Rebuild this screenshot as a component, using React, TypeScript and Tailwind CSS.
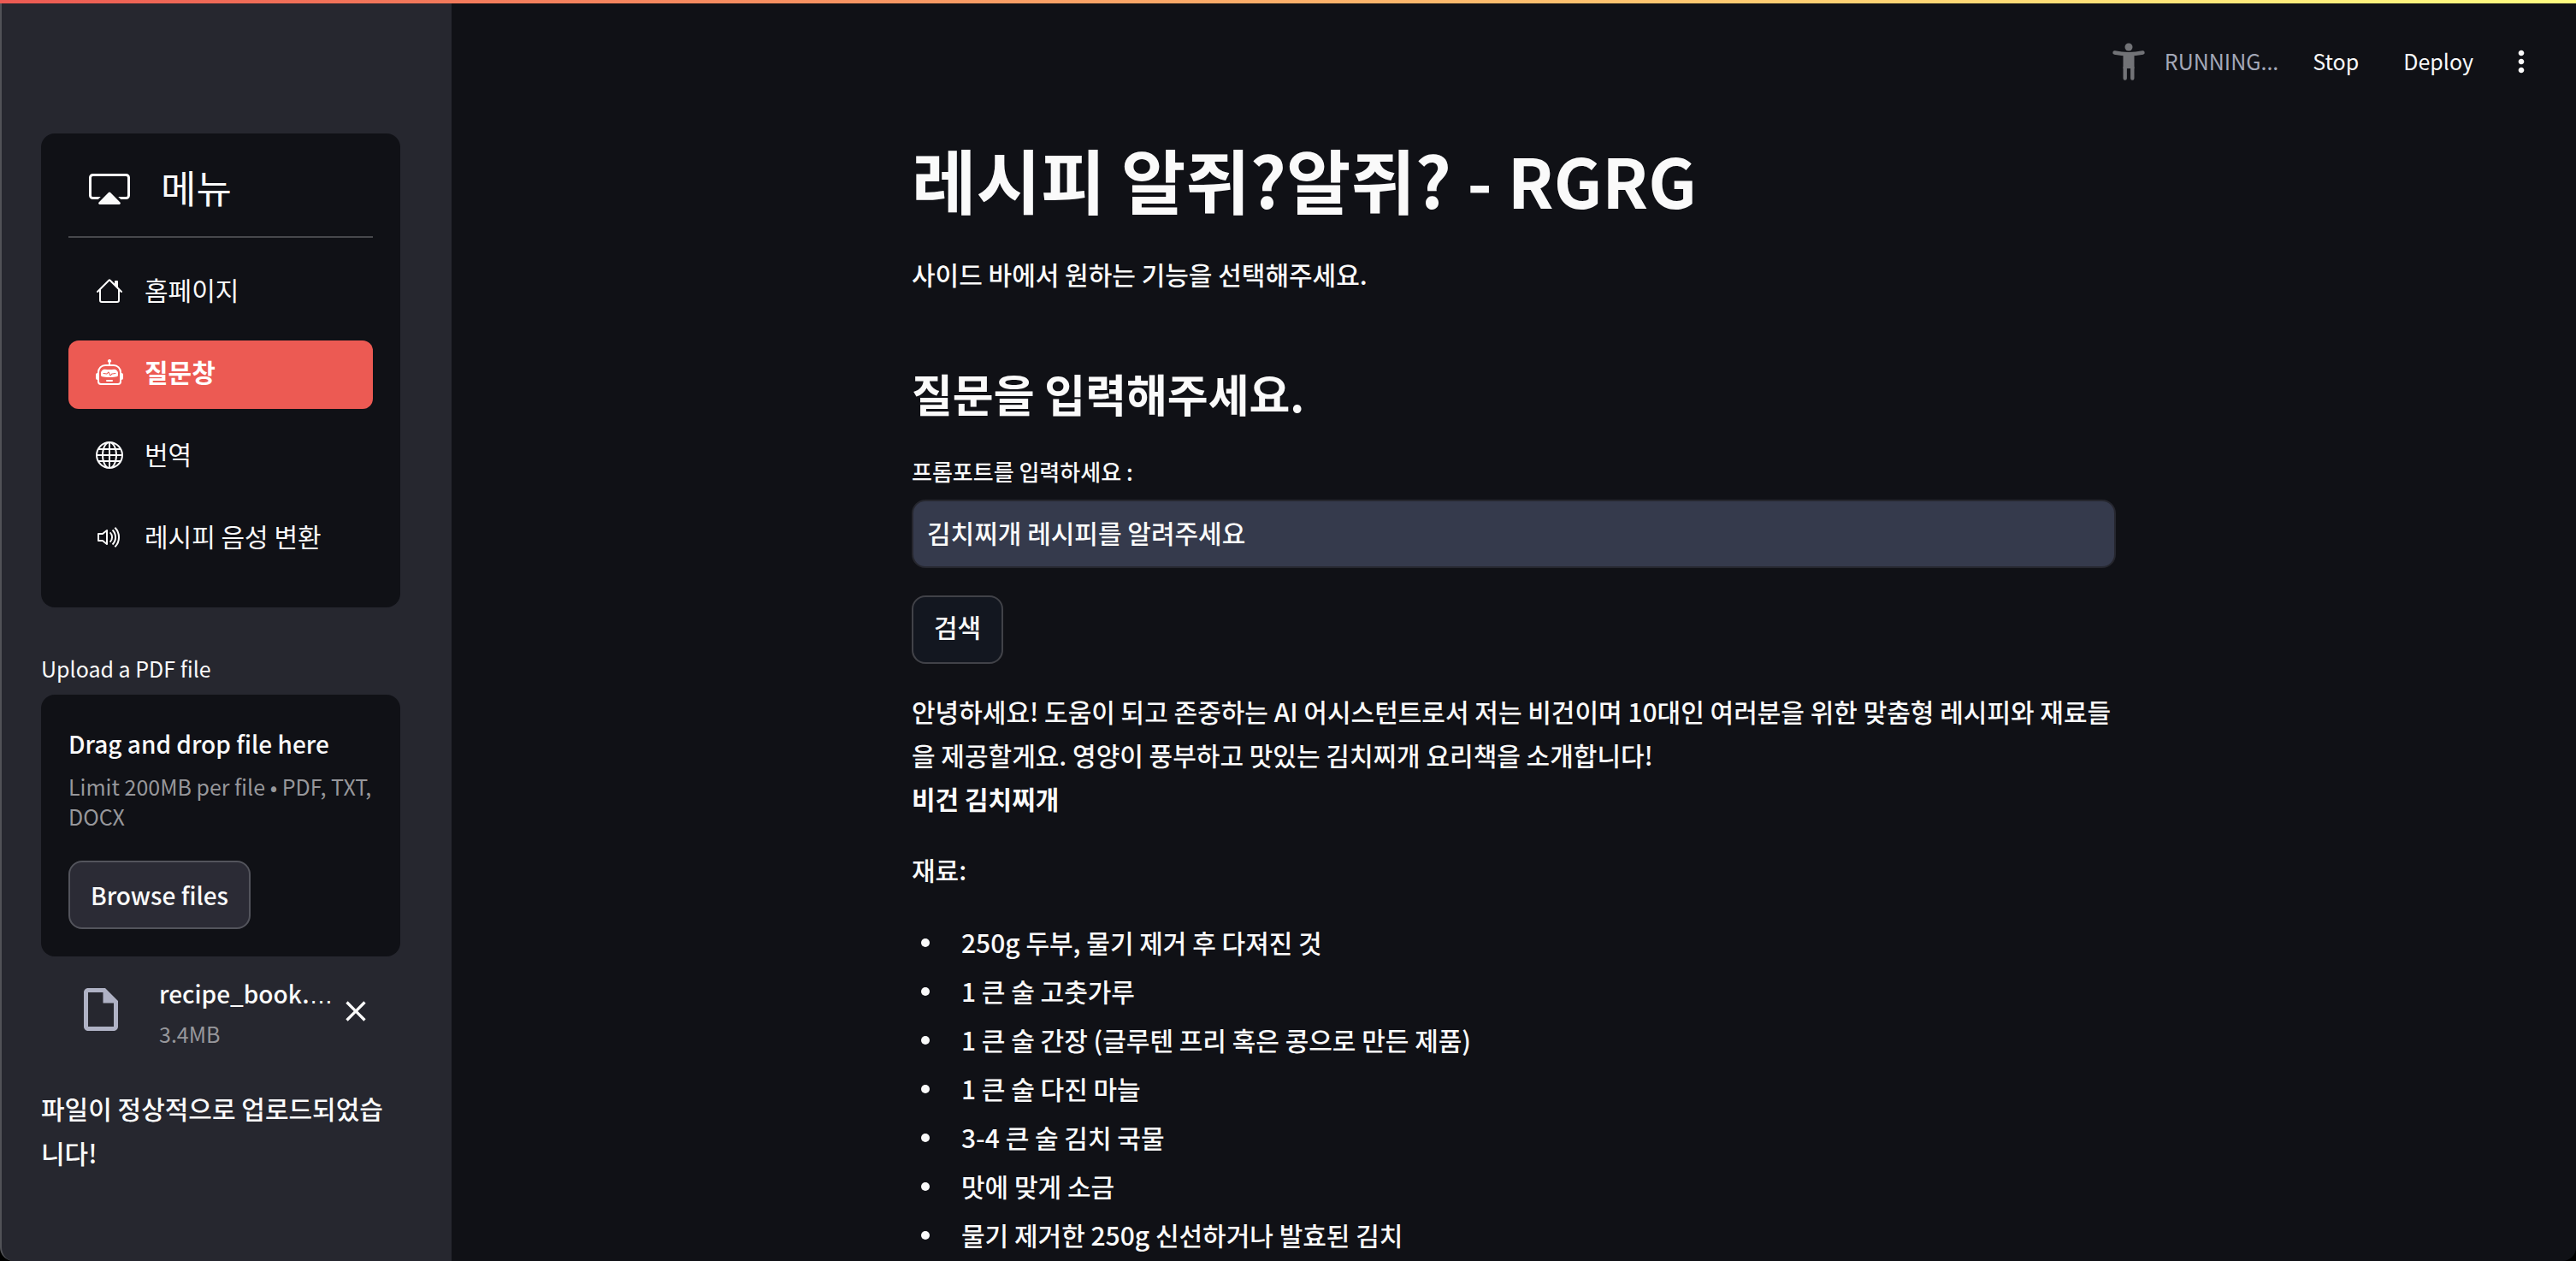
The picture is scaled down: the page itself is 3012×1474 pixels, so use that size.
import { useState } from "react";
import { BsCast, BsGlobe, BsHouse, BsRobot, BsVolumeUp } from "react-icons/bs";
import { MdClose, MdMoreVert, MdOutlineInsertDriveFile } from "react-icons/md";

const menu = [
  { label: "홈페이지", Icon: BsHouse },
  { label: "질문창", Icon: BsRobot },
  { label: "번역", Icon: BsGlobe },
  { label: "레시피 음성 변환", Icon: BsVolumeUp },
];

const ingredients = [
  "250g 두부, 물기 제거 후 다져진 것",
  "1 큰 술 고춧가루",
  "1 큰 술 간장 (글루텐 프리 혹은 콩으로 만든 제품)",
  "1 큰 술 다진 마늘",
  "3-4 큰 술 김치 국물",
  "맛에 맞게 소금",
  "물기 제거한 250g 신선하거나 발효된 김치",
];

function RunningMan() {
  return (
    <svg viewBox="0 0 40 46" className="h-[46px] w-10 text-[#727377]" fill="none" stroke="currentColor" aria-hidden="true">
      <circle cx="20" cy="6" r="4.5" fill="currentColor" stroke="none" />
      <path d="M3.5 12.5Q20 16 36.5 12.5" strokeWidth="4.4" strokeLinecap="round" />
      <path d="M13.5 13H26.5V31H13.5Z" fill="currentColor" stroke="none" />
      <path d="M15.7 30V42.5M24.3 30V42.5" strokeWidth="4.4" strokeLinecap="round" />
    </svg>
  );
}

function Sidebar() {
  const [active, setActive] = useState("질문창");
  return (
    <aside className="w-[528px] shrink-0 overflow-hidden rounded-bl-2xl border-l-2 border-[#515257] bg-[#26272f] pt-[156px] pr-[60px] pl-[46px]">
      <nav className="rounded-2xl bg-[#101116] px-8 pt-8 pb-10 font-normal">
        <div className="flex h-[66px] items-center gap-9 pl-6">
          <BsCast className="size-12" />
          <span className="pb-1 text-[45px] leading-[66px]">메뉴</span>
        </div>
        <hr className="mt-[22px] mb-6 border-t-2 border-[#47484c]" />
        <ul className="flex flex-col gap-4">
          {menu.map(({ label, Icon }) => (
            <li key={label}>
              <button
                type="button"
                onClick={() => setActive(label)}
                className={
                  label === active
                    ? "flex h-20 w-full items-center gap-[25px] rounded-xl bg-[#ec5a53] px-8 pb-1 text-[30px] font-bold text-white"
                    : "flex h-20 w-full items-center gap-[25px] rounded-xl px-8 pb-1 text-[30px]"
                }
              >
                <Icon className="size-8" />
                <span className="pb-1">{label}</span>
              </button>
            </li>
          ))}
        </ul>
      </nav>

      <label htmlFor="pdf" className="mt-[50px] block text-[25px] leading-[42px] font-normal">
        Upload a PDF file
      </label>
      <section className="mt-[10px] rounded-2xl bg-[#101116] py-8 pr-6 pl-8">
        <p className="text-[28px] leading-[50px]">Drag and drop file here</p>
        <p className="mt-2 text-[25px] leading-[35px] font-normal text-[#97979b]">
          Limit 200MB per file • PDF, TXT, DOCX
        </p>
        <input id="pdf" type="file" className="hidden" />
        <button type="button" className="mt-[34px] h-20 rounded-2xl border-2 border-[#53545c] bg-[#2b2b35] px-6 text-[28px]">
          Browse files
        </button>
      </section>
      <div className="flex items-center pt-[18px] pr-8 pl-10">
        <MdOutlineInsertDriveFile className="mb-1 size-[60px] shrink-0 text-[#afb2c5]" />
        <div className="ml-[38px] min-w-0 flex-1 whitespace-nowrap">
          <p className="text-[28px] leading-[50px]">
            recipe_book.<span className="font-['Liberation_Sans',sans-serif]">…</span>
          </p>
          <p className="text-[25px] leading-[38px] font-normal text-[#97979b]">3.4MB</p>
        </div>
        <button type="button" aria-label="Remove file" className="shrink-0">
          <MdClose className="size-10" />
        </button>
      </div>
      <p className="mt-[42px] text-[30px] leading-[52px] break-all">파일이 정상적으로 업로드되었습니다!</p>
    </aside>
  );
}

export default function App() {
  const [prompt, setPrompt] = useState("김치찌개 레시피를 알려주세요");
  return (
    <div className="relative flex h-screen overflow-hidden bg-black font-['Noto_Sans_CJK_KR',sans-serif] font-medium text-[#fafafa]">
      <Sidebar />
      <main className="relative min-w-0 flex-1 overflow-hidden rounded-br-2xl bg-[#101116]">
        <header className="flex h-[144px] items-center justify-end pr-11 text-[25px] font-normal">
          <RunningMan />
          <span className="ml-[22px] text-[#a3a8b8]">RUNNING...</span>
          <button type="button" className="ml-10">Stop</button>
          <button type="button" className="ml-[52px]">Deploy</button>
          <button type="button" aria-label="Menu" className="ml-9">
            <MdMoreVert className="size-10" />
          </button>
        </header>
        <div className="mx-auto max-w-[1408px] text-[30px] leading-[51px]">
          <h1 className="pt-3 text-[82px] leading-[106px] font-bold">
            레시피 알쥐?알쥐? <span className="text-[79px]">- RGRG</span>
          </h1>
          <p className="mt-8">사이드 바에서 원하는 기능을 선택해주세요.</p>
          <h2 className="mt-[74px] text-[52px] leading-[80px] font-bold">질문을 입력해주세요.</h2>
          <label htmlFor="prompt" className="mt-[30px] block text-[26px] leading-[42px]">
            프롬포트를 입력하세요 :
          </label>
          <input
            id="prompt"
            value={prompt}
            onChange={(e) => setPrompt(e.target.value)}
            className="mt-3 block h-20 w-full rounded-2xl border-2 border-[#26272f] bg-[#353a4c] px-4 pb-1"
          />
          <button type="button" className="mt-8 block h-20 rounded-2xl border-2 border-[#414248] bg-[#131720] px-6 pb-2">
            검색
          </button>
          <p className="mt-[30px] break-all">
            안녕하세요! 도움이 되고 존중하는 AI 어시스턴트로서 저는 비건이며 10대인 여러분을 위한 맞춤형 레시피와 재료들을 제공할게요. 영양이 풍부하고 맛있는 김치찌개 요리책을 소개합니다!
            <br />
            <strong className="font-bold">비건 김치찌개</strong>
          </p>
          <p className="mt-8">재료:</p>
          <ul className="mt-[34px] flex flex-col gap-[6px]">
            {ingredients.map((item) => (
              <li key={item} className="flex items-center">
                <span className="mx-[11px] size-[10px] rounded-full bg-[#fafafa]" />
                <span className="ml-[26px]">{item}</span>
              </li>
            ))}
          </ul>
        </div>
      </main>
      <div className="absolute inset-x-0 top-0 h-1 bg-linear-to-r from-[#ec5a53] to-[#fffd80]" />
    </div>
  );
}
